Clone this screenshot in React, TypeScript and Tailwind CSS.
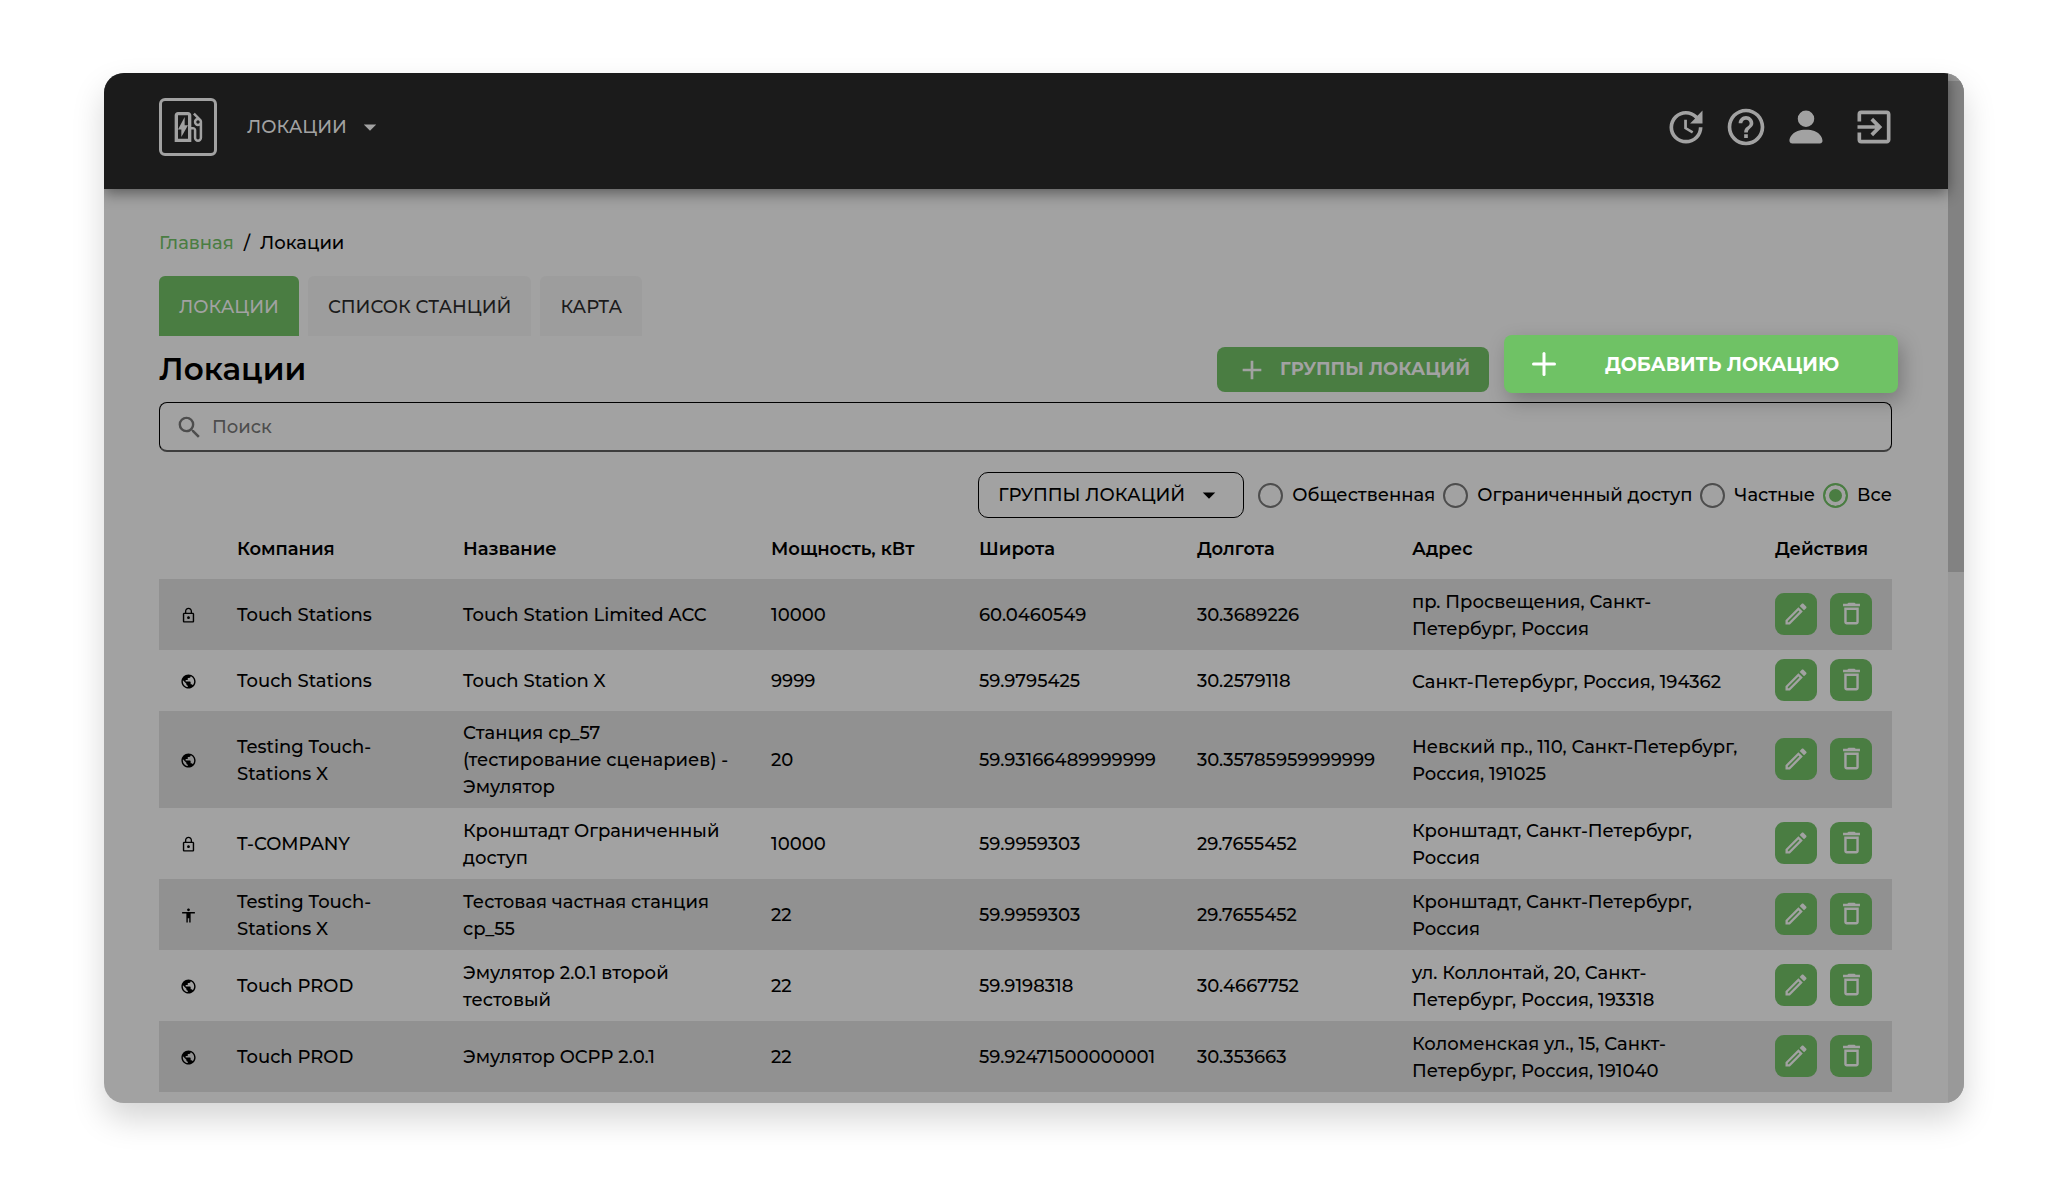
import React, { useState } from "react";
import {
  MdAdd,
  MdArrowDropDown,
  MdDeleteOutline,
  MdExitToApp,
  MdHelpOutline,
  MdLockOutline,
  MdAccessibility,
  MdOutlineEdit,
  MdOutlineEvStation,
  MdPublic,
  MdSearch,
  MdUpdate,
} from "react-icons/md";
import { BsPersonFill } from "react-icons/bs";
import { Plus } from "lucide-react";

type Access = "limited" | "public" | "private";

interface Location {
  access: Access;
  company: string;
  name: string;
  power: string;
  lat: string;
  lng: string;
  address: string;
}

const locations: Location[] = [
  { access: "limited", company: "Touch Stations", name: "Touch Station Limited ACC", power: "10000", lat: "60.0460549", lng: "30.3689226", address: "пр. Просвещения, Санкт-\nПетербург, Россия" },
  { access: "public", company: "Touch Stations", name: "Touch Station X", power: "9999", lat: "59.9795425", lng: "30.2579118", address: "Санкт-Петербург, Россия, 194362" },
  { access: "public", company: "Testing Touch-\nStations X", name: "Станция ср_57\n(тестирование сценариев) -\nЭмулятор", power: "20", lat: "59.93166489999999", lng: "30.35785959999999", address: "Невский пр., 110, Санкт-Петербург,\nРоссия, 191025" },
  { access: "limited", company: "T-COMPANY", name: "Кронштадт Ограниченный\nдоступ", power: "10000", lat: "59.9959303", lng: "29.7655452", address: "Кронштадт, Санкт-Петербург,\nРоссия" },
  { access: "private", company: "Testing Touch-\nStations X", name: "Тестовая частная станция\nср_55", power: "22", lat: "59.9959303", lng: "29.7655452", address: "Кронштадт, Санкт-Петербург,\nРоссия" },
  { access: "public", company: "Touch PROD", name: "Эмулятор 2.0.1 второй\nтестовый", power: "22", lat: "59.9198318", lng: "30.4667752", address: "ул. Коллонтай, 20, Санкт-\nПетербург, Россия, 193318" },
  { access: "public", company: "Touch PROD", name: "Эмулятор OCPP 2.0.1", power: "22", lat: "59.92471500000001", lng: "30.353663", address: "Коломенская ул., 15, Санкт-\nПетербург, Россия, 191040" },
];

const accessOptions = ["Общественная", "Ограниченный доступ", "Частные", "Все"];

function AccessIcon({ access }: { access: Access }) {
  if (access === "limited") return <MdLockOutline size={17} />;
  if (access === "private") return <MdAccessibility size={17} />;
  return <MdPublic size={17} />;
}

function TopBar() {
  return (
    <header className="relative flex h-[116px] items-start justify-between bg-[#1b1b1b] pr-14 pl-[55px] pt-[25px] text-[#a2a2a2] shadow-[0_4px_14px_rgba(0,0,0,0.45)]">
      <div className="flex items-center gap-[30px]">
        <a href="#home" aria-label="Главная" className="flex size-[58px] items-center justify-center rounded-md border-[3px] border-[#a2a2a2]">
          <MdOutlineEvStation size={40} />
        </a>
        <button type="button" className="flex items-center gap-2">
          ЛОКАЦИИ
          <MdArrowDropDown size={30} />
        </button>
      </div>
      <nav className="flex h-[58px] items-center">
        <button type="button" aria-label="Обновить"><MdUpdate size={44} /></button>
        <button type="button" aria-label="Помощь" className="ml-4"><MdHelpOutline size={44} /></button>
        <button type="button" aria-label="Профиль" className="ml-4"><BsPersonFill size={44} /></button>
        <button type="button" aria-label="Выйти" className="ml-6 -mr-1"><MdExitToApp size={44} /></button>
      </nav>
    </header>
  );
}

function LocationTable() {
  return (
    <table className="w-full table-fixed text-left text-black">
      <colgroup>
        <col className="w-[70px]" />
        <col className="w-[226px]" />
        <col className="w-[308px]" />
        <col className="w-[208px]" />
        <col className="w-[218px]" />
        <col className="w-[215px]" />
        <col />
        <col className="w-[125px]" />
      </colgroup>
      <thead>
        <tr className="h-[61px] whitespace-nowrap">
          <th aria-label="Доступ" />
          <th className="px-2 pt-0.5 font-semibold">Компания</th>
          <th className="px-2 pt-0.5 font-semibold">Название</th>
          <th className="px-2 pt-0.5 font-semibold">Мощность, кВт</th>
          <th className="px-2 pt-0.5 font-semibold">Широта</th>
          <th className="px-2 pt-0.5 font-semibold">Долгота</th>
          <th className="px-2 pt-0.5 font-semibold">Адрес</th>
          <th className="px-2 pt-0.5 font-semibold">Действия</th>
        </tr>
      </thead>
      <tbody className="font-medium">
        {locations.map((l, i) => (
          <tr key={i} className="h-[61px] whitespace-pre odd:bg-[#919191]">
            <td className="pt-0.5 pl-[21px]"><AccessIcon access={l.access} /></td>
            <td className="px-2 pt-[9px] pb-[7px]">{l.company}</td>
            <td className="px-2 pt-[9px] pb-[7px]">{l.name}</td>
            <td className="px-2 pt-0.5">{l.power}</td>
            <td className="px-2 pt-0.5">{l.lat}</td>
            <td className="px-2 pt-0.5">{l.lng}</td>
            <td className="px-2 pt-[10px] pb-[7px]">{l.address}</td>
            <td className="px-2 pb-0.5">
              <div className="flex gap-[13px] text-[#a2a2a2]">
                <button type="button" aria-label="Редактировать" className="flex size-[42px] shrink-0 items-center justify-center rounded-[9px] bg-[#4a7d42]">
                  <MdOutlineEdit size={28} />
                </button>
                <button type="button" aria-label="Удалить" className="flex size-[42px] shrink-0 items-center justify-center rounded-[9px] bg-[#4a7d42]">
                  <MdDeleteOutline size={29} />
                </button>
              </div>
            </td>
          </tr>
        ))}
      </tbody>
    </table>
  );
}

export default function App() {
  const [access, setAccess] = useState("Все");

  return (
    <div className="min-h-screen bg-white pr-[103px] pl-[104px] pt-[73px] pb-[74px] font-['Montserrat','Inter',sans-serif] text-[18px] leading-[27px] font-medium">
      <div className="flex overflow-hidden rounded-[20px] bg-[#a2a2a2] shadow-[0_16px_32px_rgba(0,0,0,0.17)]">
        <div className="min-w-0 flex-1">
          <TopBar />
          <main className="pt-[41px] pr-14 pb-[11px] pl-[55px] text-black">
            <nav aria-label="Навигация" className="flex gap-[10px]">
              <a href="#home" className="text-[#4a7d42]">Главная</a>
              <span>/</span>
              <span>Локации</span>
            </nav>

            <div role="tablist" className="mt-[19px] flex h-[60px] gap-[9px] text-[#1b1b1b]">
              <button type="button" role="tab" aria-selected="true" className="rounded-t-md bg-[#4a7d42] px-5 pt-0.5 text-[#a2a2a2]">ЛОКАЦИИ</button>
              <button type="button" role="tab" aria-selected="false" className="rounded-t-md bg-[#9d9d9d] px-5 pt-0.5">СПИСОК СТАНЦИЙ</button>
              <button type="button" role="tab" aria-selected="false" className="rounded-t-md bg-[#9d9d9d] px-5 pt-0.5">КАРТА</button>
            </div>

            <div className="-mt-px flex h-[58px] items-end">
              <h1 className="mr-auto pb-1 text-[31px] leading-[40px] font-semibold">Локации</h1>
              <button type="button" className="mb-px flex h-[45px] w-[272px] items-center gap-3 rounded-lg bg-[#4a7d42] pl-[19px] font-bold whitespace-nowrap text-[#a2a2a2]">
                <MdAdd size={32} />
                <span>ГРУППЫ ЛОКАЦИЙ</span>
              </button>
              <button type="button" className="relative -mr-1.5 ml-[15px] flex h-[58px] w-[394px] items-center rounded-lg bg-[#6fc265] pr-4 pl-[22px] text-[19px] font-bold text-white shadow-[4px_8px_20px_rgba(0,0,0,0.25)]">
                <Plus size={36} />
                <span className="flex-1 text-center">ДОБАВИТЬ ЛОКАЦИЮ</span>
              </button>
            </div>

            <label className="mt-[9px] flex h-[50px] items-center gap-2 rounded-lg border border-b-2 border-black border-b-[#3d3d3d] pt-0.5 pl-[15px] text-[#4d4d4d]">
              <MdSearch size={29} />
              <input type="search" aria-label="Поиск" placeholder="Поиск" className="min-w-0 flex-1 bg-transparent outline-none placeholder:text-[#4d4d4d]" />
            </label>

            <div className="mt-5 flex h-[46px] items-center justify-end">
              <div className="relative mr-[14px] flex h-full w-[266px] items-center">
                <select aria-label="Группы локаций" className="h-full w-full appearance-none rounded-[10px] border border-black bg-transparent pl-[19px]">
                  <option>ГРУППЫ ЛОКАЦИЙ</option>
                </select>
                <MdArrowDropDown size={30} className="pointer-events-none absolute right-5" />
              </div>
              <fieldset className="flex items-center gap-2">
                {accessOptions.map((o) => (
                  <label key={o} className="flex items-center gap-[9px] whitespace-nowrap">
                    <input
                      type="radio"
                      name="access"
                      checked={access === o}
                      onChange={() => setAccess(o)}
                      className="size-[25px] appearance-none rounded-full border-2 border-[#4d4d4d] checked:border-[#4a7d42] checked:bg-[#4a7d42] checked:shadow-[inset_0_0_0_4px_#a2a2a2]"
                    />
                    {o}
                  </label>
                ))}
              </fieldset>
            </div>

            <LocationTable />
          </main>
        </div>
        <div aria-hidden="true" className="w-4 shrink-0 bg-[#999] pt-2">
          <div className="h-[48%] bg-[#828282]" />
        </div>
      </div>
    </div>
  );
}
